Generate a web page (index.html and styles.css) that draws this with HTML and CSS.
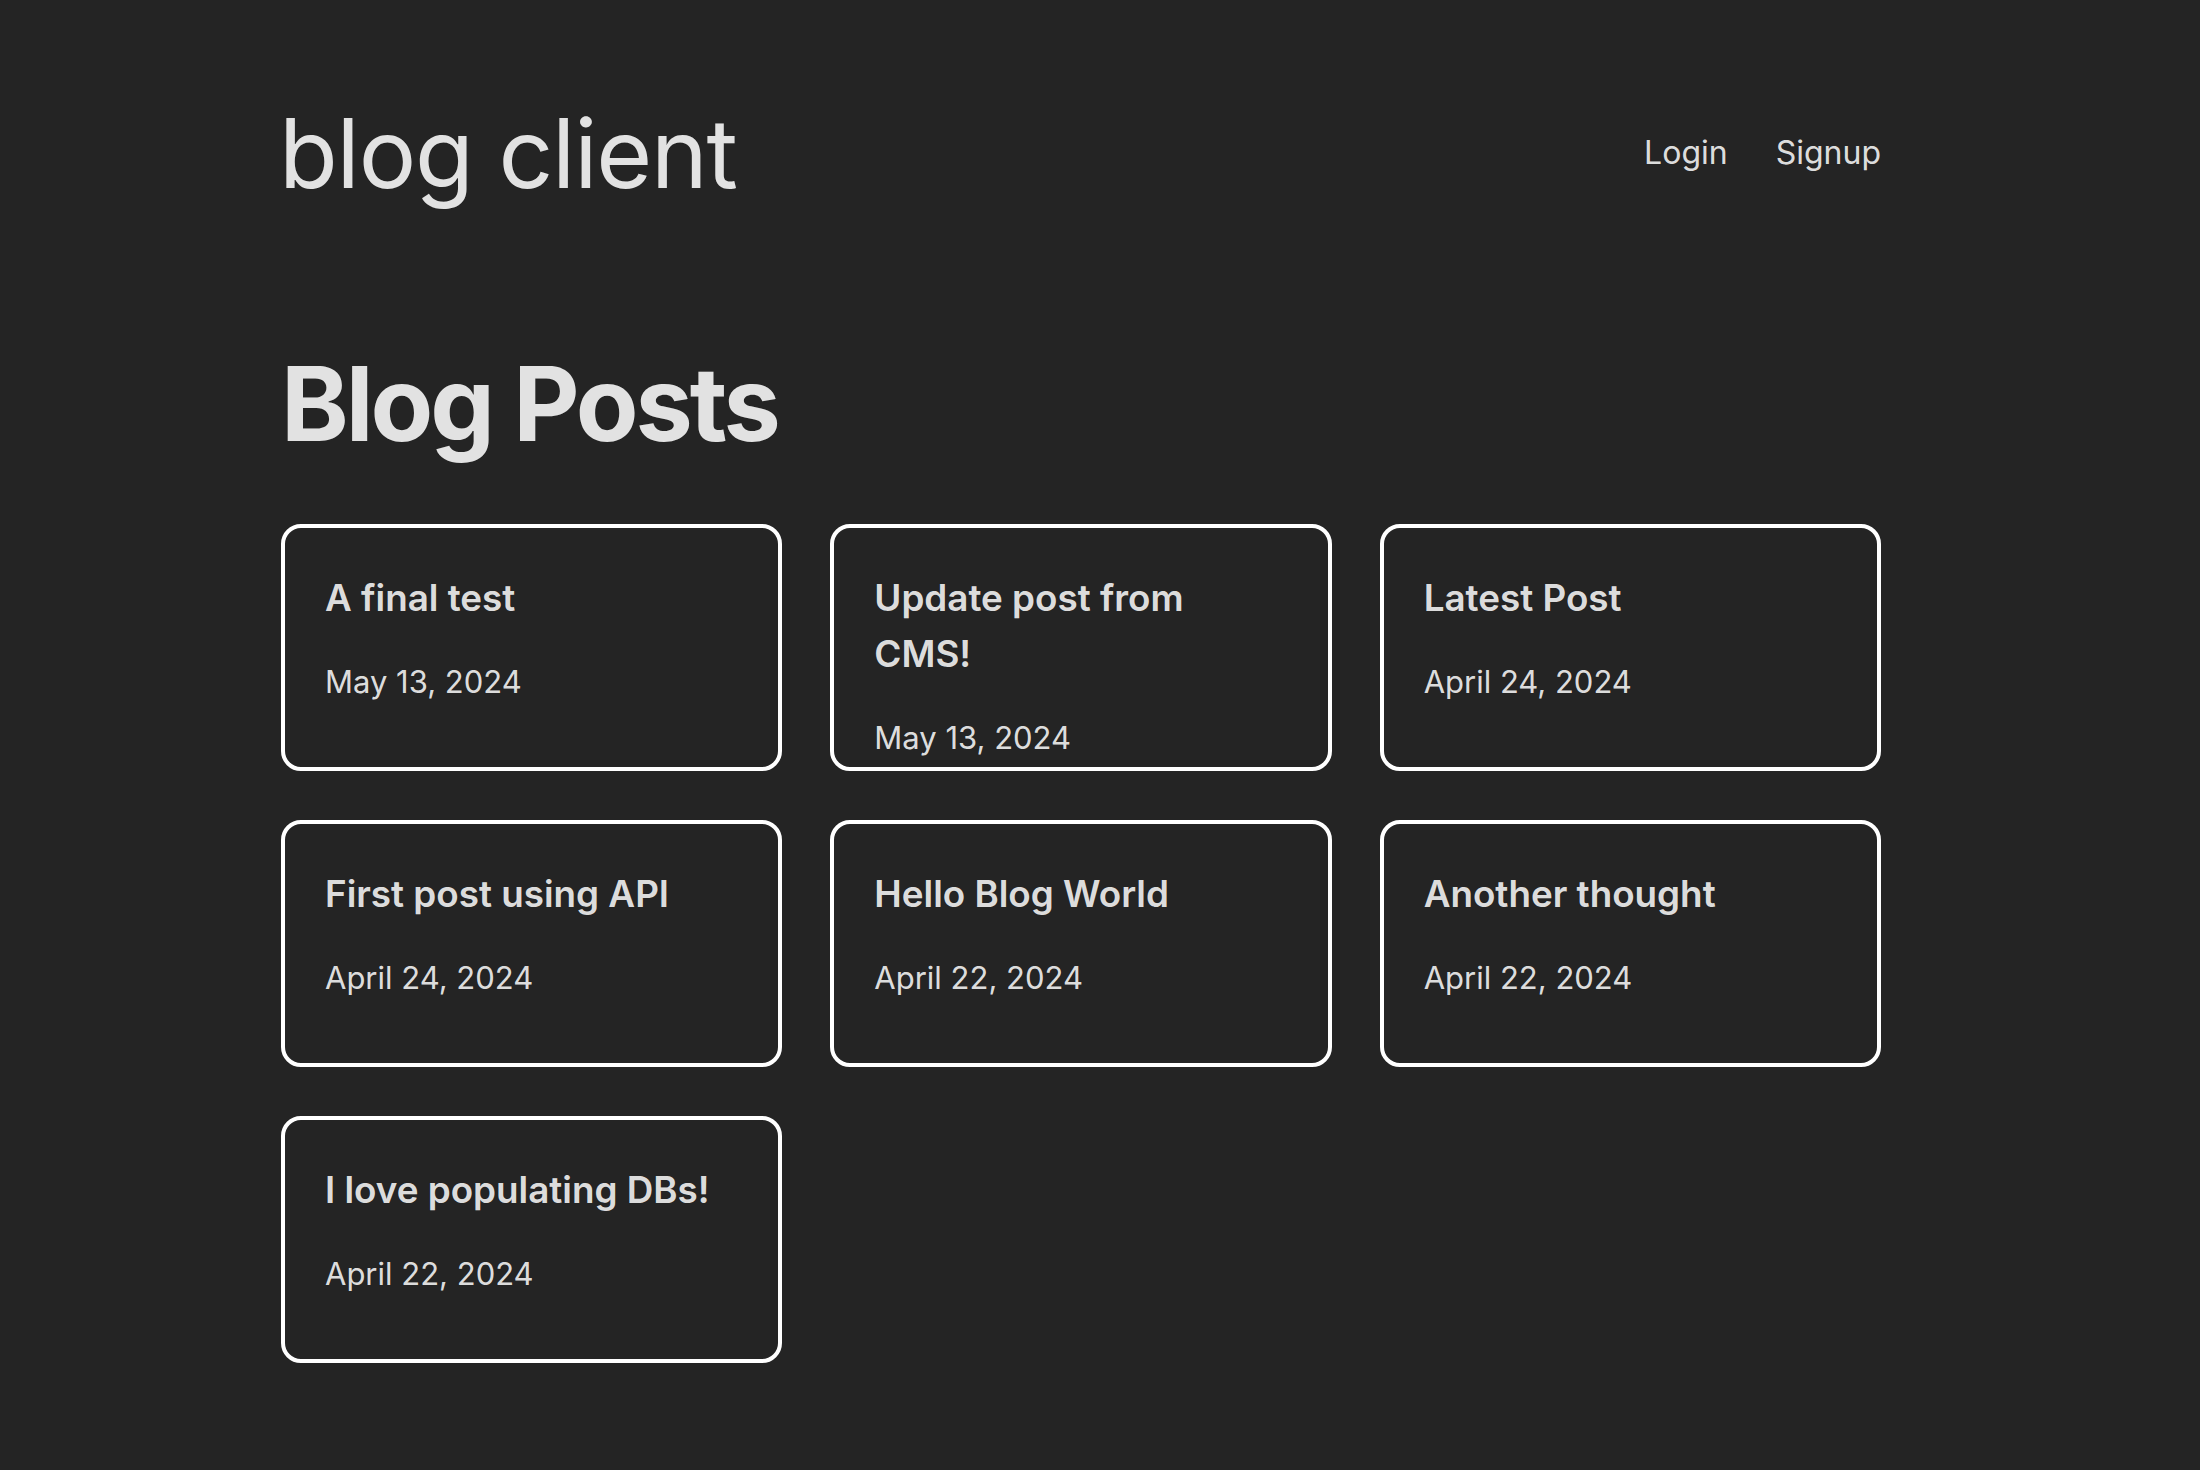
FILE: index.html
```html
<!DOCTYPE html>
<html lang="en">
<head>
<meta charset="utf-8">
<title>blog client</title>
<link rel="stylesheet" href="styles.css">
</head>
<body>
<div class="page">
  <header class="header">
    <h1 class="brand">blog client</h1>
    <nav class="nav">
      <a class="nav-link" href="#">Login</a>
      <a class="nav-link" href="#">Signup</a>
    </nav>
  </header>
  <main>
    <h2 class="page-title">Blog Posts</h2>
    <div class="grid">
      <a class="card" href="#"><h3 class="card-title">A final test</h3><p class="card-date">May 13, 2024</p></a>
      <a class="card" href="#"><h3 class="card-title">Update post from CMS!</h3><p class="card-date">May 13, 2024</p></a>
      <a class="card" href="#"><h3 class="card-title">Latest Post</h3><p class="card-date">April 24, 2024</p></a>
      <a class="card" href="#"><h3 class="card-title">First post using API</h3><p class="card-date">April 24, 2024</p></a>
      <a class="card" href="#"><h3 class="card-title">Hello Blog World</h3><p class="card-date">April 22, 2024</p></a>
      <a class="card" href="#"><h3 class="card-title">Another thought</h3><p class="card-date">April 22, 2024</p></a>
      <a class="card" href="#"><h3 class="card-title">I love populating DBs!</h3><p class="card-date">April 22, 2024</p></a>
    </div>
  </main>
</div>
</body>
</html>
```
FILE: styles.css
```css
html, body {
  margin: 0;
  padding: 0;
  background: #242424;
  color: rgba(255, 255, 255, 0.87);
  font-family: Inter, "Noto Sans", sans-serif;
}

.page {
  width: 1600px;
  margin-left: 281px;
  padding-top: 101px;
}

.header {
  display: flex;
  justify-content: space-between;
  align-items: flex-start;
}

.brand {
  margin: 0 0 0 -2px;
  font-size: 96px;
  font-weight: 400;
  line-height: 1.1;
  letter-spacing: -1.2px;
}

.nav {
  display: flex;
  gap: 48px;
  margin-top: 28px;
}

.nav-link {
  color: rgba(255, 255, 255, 0.87);
  text-decoration: none;
  font-size: 32px;
  line-height: 48px;
}

.page-title {
  margin: 141px 0 0;
  font-size: 102.4px;
  font-weight: 700;
  line-height: 1.1;
  letter-spacing: -3px;
}

.grid {
  margin-top: 64px;
  display: grid;
  grid-template-columns: repeat(3, 1fr);
  gap: 49px 48px;
}

.card {
  box-sizing: border-box;
  height: 247px;
  border: 4px solid #fff;
  border-radius: 20px;
  padding: 42px 40px 0;
  color: rgba(255, 255, 255, 0.87);
  text-decoration: none;
}

.card-title {
  margin: 0;
  font-size: 36.8px;
  font-weight: 600;
  line-height: 56px;
}

.card-date {
  margin: 33px 0 0;
  font-size: 31px;
  line-height: 45px;
}
```
